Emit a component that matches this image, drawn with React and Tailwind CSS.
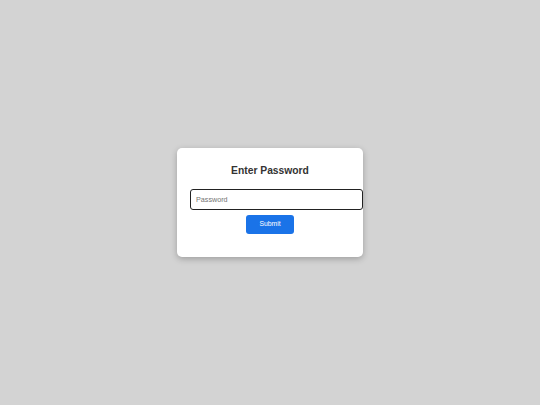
export default function App() {
  return (
    <div className="w-[540px] h-[405px] bg-[#d3d3d3] flex items-center justify-center" style={{ fontFamily: '"Liberation Sans", Arial, sans-serif' }}>
      <div className="w-[186px] bg-white rounded-[5px] shadow-[0_2px_6px_rgba(0,0,0,0.25)] px-[13px] pt-[17px] pb-[23px] flex flex-col">
        <h2 className="text-[10.3px] font-bold text-[#333] text-center leading-[12px] mb-[12px]">Enter Password</h2>
        <input
          type="password"
          placeholder="Password"
          className="w-[173px] h-[21px] border border-[#222] rounded-[3px] px-[5px] text-[7.2px] text-[#333] placeholder:text-[#757575] outline-none"
        />
        <button className="self-center mt-[5px] w-[48px] h-[19px] bg-[#1a73e8] text-white text-[6.8px] rounded-[3px]">Submit</button>
      </div>
    </div>
  );
}
